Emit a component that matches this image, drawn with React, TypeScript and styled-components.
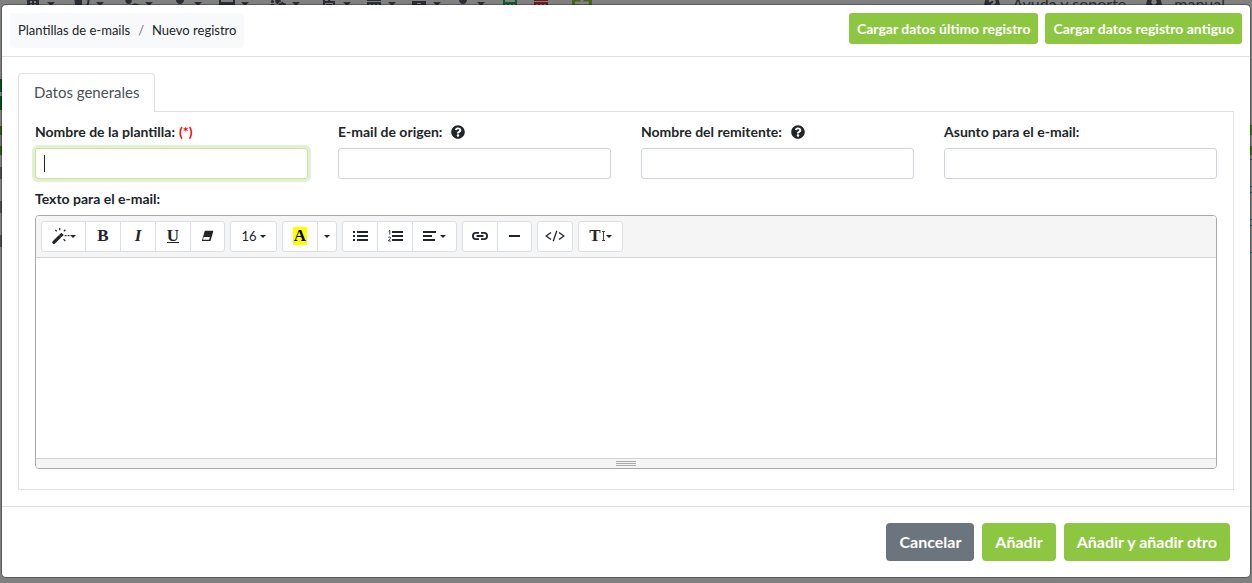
import React from 'react';
import styled, { createGlobalStyle, css } from 'styled-components';
import {
  FaBuilding, FaShieldAlt, FaUserShield, FaUser, FaWindowMaximize, FaUsersCog, FaFileInvoice,
  FaCalendarAlt, FaArchive, FaUserTie, FaCalculator, FaQuestionCircle, FaUserCircle, FaPlus,
} from 'react-icons/fa';

const GlobalStyle = createGlobalStyle`
  *, *::before, *::after { box-sizing: border-box; }
  body {
    margin: 0;
    background: #808080;
    color: #212529;
    font-family: Lato, "Liberation Sans", sans-serif;
    font-size: 14px;
    line-height: 20px;
  }
  button, input { font-family: inherit; }
`;

const Page = styled.div`
  position: relative;
  min-height: 100vh;
  overflow: hidden;
  padding: 4px 1px 5px;
`;

const Underlay = styled.div`
  position: absolute;
  inset: 0;
  display: flex;
  flex-direction: column;
  gap: 71px;
  color: #2a2d33;
`;

const NavBar = styled.div`
  display: flex;
  align-items: center;
  height: 8px;
  padding-left: 25px;
  font-size: 16px;
  line-height: 16px;
`;

const NavItem = styled.span<{ $w: number; $color?: string }>`
  display: flex;
  flex: none;
  align-items: center;
  gap: 6px;
  width: ${p => p.$w}px;
  color: ${p => p.$color ?? 'inherit'};
`;

const NavCaret = styled.i`
  border: 4px solid transparent;
  border-top-color: currentColor;
  border-bottom: 0;
`;

const AddTile = styled.span`
  display: flex;
  justify-content: center;
  width: 20px;
  height: 18px;
  background: #47641f;
  color: #808080;
`;

const NavUser = styled.span`
  display: flex;
  align-items: center;
  gap: 12px;
  margin-left: auto;
  padding-right: 20px;
  & + & { margin-left: 0; padding-right: 27px; }
`;

const PageEdges = styled.div`
  display: flex;
  justify-content: space-between;
`;

const Edge = styled.div`
  display: grid;
  grid-auto-rows: max-content;
  width: 2px;
`;

const EdgeMark = styled.i<{ $h: number; $color: string }>`
  height: ${p => p.$h}px;
  background: ${p => p.$color};
`;

const Modal = styled.div`
  position: relative;
  background: #fff;
  background-clip: padding-box;
  border: 1px solid rgba(0, 0, 0, 0.3);
  border-radius: 5px;
`;

const Header = styled.header`
  display: flex;
  align-items: flex-start;
  justify-content: space-between;
  padding: 8px;
  border-bottom: 1px solid #dee2e6;
`;

const Breadcrumb = styled.nav`
  display: flex;
  gap: 8px;
  padding: 7px 8px 8px;
  background: #f8f9fa;
  border-radius: 4px;
  font-size: 13px;
`;

const Crumb = styled.a`
  color: #212529;
  text-decoration: none;
`;

const Slash = styled.span`
  color: #6c757d;
`;

const Actions = styled.div<{ $gap: number }>`
  display: flex;
  justify-content: flex-end;
  gap: ${p => p.$gap}px;
`;

const Button = styled.button<{ $small?: boolean; $muted?: boolean }>`
  border: 0;
  border-radius: ${p => (p.$small ? 3 : 4)}px;
  background: ${p => (p.$muted ? '#6c757d' : '#8dc742')};
  color: #fff;
  font-weight: 700;
  cursor: pointer;
  ${p => p.$small
    ? css`height: 31px; padding: 0 8px; font-size: 14px;`
    : css`height: 38px; padding: 0 13px 2px; font-size: 16px;`}
`;

const Body = styled.main`
  padding: 16px;
`;

const Tabs = styled.div`
  display: flex;
`;

const Tab = styled.button`
  position: relative;
  height: 39px;
  margin-bottom: -1px;
  padding: 0 15px 2px;
  border: 1px solid #dee2e6;
  border-bottom: 0;
  border-radius: 4px 4px 0 0;
  background: #fff;
  color: #495057;
  font-size: 15px;
`;

const Panel = styled.section`
  padding: 10px 16px 20px;
  border: 1px solid #dee2e6;
`;

const Fields = styled.div`
  display: grid;
  grid-template-columns: repeat(4, 1fr);
  gap: 30px;
  margin-bottom: 10px;
`;

const Label = styled.label`
  display: flex;
  align-items: center;
  gap: 4px;
  height: 20px;
  font-weight: 700;
  svg { margin-left: 5px; }
`;

const Required = styled.span`
  color: #f00;
`;

const TextInput = styled.input<{ $active?: boolean }>`
  display: block;
  width: 100%;
  height: 31px;
  margin-top: 6px;
  padding: 4px 8px;
  border: 1px solid #ced4da;
  border-radius: 3px;
  outline: 0;
  background: #fff;
  font-size: 14px;
  ${p => p.$active && css`
    border-color: #c8e3a4;
    box-shadow: 0 0 0 3px #e2f1cf;
    caret-color: transparent;
    background: linear-gradient(#212529, #212529) 8px center / 1px 17px no-repeat #fff;
  `}
`;

const Editor = styled.div`
  margin-top: 6px;
  border: 1px solid #a9a9a9;
  border-radius: 4px;
  overflow: hidden;
`;

const Toolbar = styled.div`
  display: flex;
  gap: 5px;
  padding: 5px;
  background: #f5f5f5;
  border-bottom: 1px solid #d3d3d3;
`;

const Group = styled.div`
  display: flex;
`;

const Tool = styled.button<{ $w?: number; $gap?: number }>`
  display: flex;
  align-items: center;
  justify-content: center;
  gap: ${p => p.$gap ?? 3}px;
  width: ${p => p.$w ?? 36}px;
  height: 31px;
  padding: 0 0 1px;
  border: 1px solid #dae0e5;
  background: #fff;
  color: #212529;
  font-size: 13px;
  & + & { margin-left: -1px; }
  &:first-child { border-top-left-radius: 3px; border-bottom-left-radius: 3px; }
  &:last-child { border-top-right-radius: 3px; border-bottom-right-radius: 3px; }
`;

const Caret = styled.i`
  border: 3px solid transparent;
  border-top-color: currentColor;
  border-bottom: 0;
`;

const Glyph = styled.span<{ $italic?: boolean; $underline?: boolean }>`
  font: ${p => (p.$italic ? 'italic' : 'normal')} 700 17px/18px "Liberation Serif", serif;
  ${p => p.$underline && css`border-bottom: 1px solid; line-height: 13px;`}
`;

const Highlight = styled(Glyph)`
  padding: 0 1px;
  background: #ff0;
  color: #000;
`;

const EditArea = styled.div`
  height: 200px;
  background: #fff;
  outline: 0;
`;

const ResizeBar = styled.div`
  display: grid;
  gap: 1px;
  justify-content: center;
  padding: 2px 0;
  background: #f5f5f5;
  border-top: 1px solid #d3d3d3;
`;

const Grip = styled.i`
  width: 20px;
  height: 1px;
  background: #a9a9a9;
`;

const Footer = styled.footer`
  padding: 16px 20px 16px 16px;
  border-top: 1px solid #dee2e6;
`;

const WandIcon = () => (
  <svg width="18" height="16" viewBox="0 0 18 16" fill="none" stroke="#212529">
    <path d="M1.900 14.300 7.300 9" strokeWidth="3.200" strokeLinecap="round" />
    <path d="M8.200 8.200 10.600 5.800" strokeWidth="3.200" />
    <path d="M3.300 2l1.500 1.300M7.700 0v2.200M11.800 3.200l1.600-1.400M12.700 7.700h1.800M15.700 7.700h1.800M11.600 11.200l1.700 2" strokeWidth="1.200" />
  </svg>
);

const EraserIcon = () => (
  <svg width="13" height="12" viewBox="0 0 13 12">
    <path d="M3.800.8h8.600L9.500 11H.8z" fill="#212529" />
    <path d="M2.700 7h6.200l-.8 2.800H2z" fill="#fff" />
  </svg>
);

const LinesIcon = ({ numbered }: { numbered?: boolean }) => (
  <svg width="15" height="12" viewBox="0 0 15 12" fill="#212529">
    <path d="M4 1h11v2H4zM4 5h11v2H4zM4 9h11v2H4z" />
    {numbered
      ? <path d="M.6 1.200 1.800.4v4M.3 7.600c.5-.9 2.300-.8 2.200.3C2.400 8.900.8 9.800.5 11h2.400" fill="none" stroke="#212529" strokeWidth=".9" />
      : <path d="M0 1h2v2H0zM0 5h2v2H0zM0 9h2v2H0z" />}
  </svg>
);

const AlignIcon = () => (
  <svg width="14" height="12" viewBox="0 0 14 12" fill="#212529">
    <path d="M0 1h13v2H0zM0 5h9v2H0zM0 9h12v2H0z" />
  </svg>
);

const LinkIcon = () => (
  <svg width="16" height="10" viewBox="0 0 16 10" fill="none" stroke="#212529" strokeWidth="1.800">
    <path d="M7 1.800H4C2.200 1.800.9 3.200.9 5S2.200 8.200 4 8.200h3" />
    <path d="M9 1.800h3c1.800 0 3.100 1.400 3.100 3.200S13.800 8.200 12 8.200H9" />
    <path d="M4.500 5h7" />
  </svg>
);

const RuleIcon = () => (
  <svg width="11" height="4" viewBox="0 0 11 4"><path d="M0 1h11v2H0z" fill="#212529" /></svg>
);

const CodeIcon = () => (
  <svg width="20" height="12" viewBox="0 0 20 12" fill="none" stroke="#212529" strokeWidth="1.300">
    <path d="M6 2.500 1.200 6 6 9.500M14 2.500 18.800 6 14 9.500M11.800.8 8.200 11.200" />
  </svg>
);

const HeightIcon = () => (
  <svg width="5" height="12" viewBox="0 0 5 12" fill="none" stroke="#5a3a28" strokeWidth="1">
    <path d="M2.500 1v10M1 1.500h3M1 10.500h3" />
  </svg>
);

const navItems = [
  { icon: FaBuilding, w: 49 }, { icon: FaShieldAlt, w: 49 }, { icon: FaUserShield, w: 49 },
  { icon: FaUser, w: 47 }, { icon: FaWindowMaximize, w: 51 }, { icon: FaUsersCog, w: 51 },
  { icon: FaFileInvoice, w: 45 }, { icon: FaCalendarAlt, w: 45 }, { icon: FaArchive, w: 44 },
  { icon: FaUserTie, w: 47 },
];

const leftMarks: [number, string][] = [
  [13, '#0a4d1c'], [4, '#808080'], [14, '#0a4d1c'], [16, '#808080'], [9, '#2f5a12'],
  [11, '#707070'], [9, '#2f5a12'], [12, '#808080'], [12, '#4a4d50'], [22, '#808080'],
  [12, '#4a4d50'], [22, '#808080'], [12, '#4a4d50'],
];
const rightMarks: [number, string][] = [
  [46, '#808080'], [10, '#3f6f12'], [11, '#808080'], [9, '#3f6f12'], [4, '#808080'], [1, '#1c5a66'],
  [26, '#808080'], [1, '#1c5a66'], [5, '#808080'], [1, '#1c5a66'], [26, '#808080'], [1, '#1c5a66'],
  [5, '#808080'], [1, '#1c5a66'], [26, '#808080'], [1, '#1c5a66'],
];

export default function App() {
  return (
    <>
      <GlobalStyle />
      <Page>
        <Underlay aria-hidden="true">
          <NavBar>
            {navItems.map(({ icon: Icon, w }, i) => (
              <NavItem key={i} $w={w}><Icon /><NavCaret /></NavItem>
            ))}
            <NavItem $w={31} $color="#0f5a2c"><FaCalculator /></NavItem>
            <NavItem $w={39} $color="#6a1a1a"><FaCalendarAlt /></NavItem>
            <AddTile><FaPlus /></AddTile>
            <NavUser><FaQuestionCircle />Ayuda y soporte</NavUser>
            <NavUser><FaUserCircle />manual</NavUser>
          </NavBar>
          <PageEdges>
            <Edge>{leftMarks.map(([h, c], i) => <EdgeMark key={i} $h={h} $color={c} />)}</Edge>
            <Edge>{rightMarks.map(([h, c], i) => <EdgeMark key={i} $h={h} $color={c} />)}</Edge>
          </PageEdges>
        </Underlay>

        <Modal role="dialog" aria-label="Nuevo registro">
          <Header>
            <Breadcrumb>
              <Crumb href="#plantillas">Plantillas de e-mails</Crumb>
              <Slash>/</Slash>
              <Crumb href="#nuevo">Nuevo registro</Crumb>
            </Breadcrumb>
            <Actions $gap={7}>
              <Button $small type="button">Cargar datos último registro</Button>
              <Button $small type="button">Cargar datos registro antiguo</Button>
            </Actions>
          </Header>

          <Body>
            <Tabs role="tablist">
              <Tab role="tab" aria-selected="true" type="button">Datos generales</Tab>
            </Tabs>
            <Panel>
              <Fields>
                <div>
                  <Label htmlFor="nombre">Nombre de la plantilla: <Required>(*)</Required></Label>
                  <TextInput id="nombre" $active />
                </div>
                <div>
                  <Label htmlFor="origen">E-mail de origen: <FaQuestionCircle /></Label>
                  <TextInput id="origen" />
                </div>
                <div>
                  <Label htmlFor="remitente">Nombre del remitente: <FaQuestionCircle /></Label>
                  <TextInput id="remitente" />
                </div>
                <div>
                  <Label htmlFor="asunto">Asunto para el e-mail:</Label>
                  <TextInput id="asunto" />
                </div>
              </Fields>

              <Label as="div" id="texto">Texto para el e-mail:</Label>
              <Editor>
                <Toolbar role="toolbar">
                  <Group>
                    <Tool $w={45} $gap={0} aria-label="Estilo"><WandIcon /><Caret /></Tool>
                    <Tool><Glyph>B</Glyph></Tool>
                    <Tool><Glyph $italic>I</Glyph></Tool>
                    <Tool><Glyph $underline>U</Glyph></Tool>
                    <Tool $w={35} aria-label="Borrar formato"><EraserIcon /></Tool>
                  </Group>
                  <Group>
                    <Tool $w={47}>16<Caret /></Tool>
                  </Group>
                  <Group>
                    <Tool><Highlight>A</Highlight></Tool>
                    <Tool $w={20} aria-label="Más colores"><Caret /></Tool>
                  </Group>
                  <Group>
                    <Tool aria-label="Lista"><LinesIcon /></Tool>
                    <Tool aria-label="Lista numerada"><LinesIcon numbered /></Tool>
                    <Tool $w={45} aria-label="Párrafo"><AlignIcon /><Caret /></Tool>
                  </Group>
                  <Group>
                    <Tool aria-label="Enlace"><LinkIcon /></Tool>
                    <Tool $w={35} aria-label="Línea horizontal"><RuleIcon /></Tool>
                  </Group>
                  <Group>
                    <Tool aria-label="Código"><CodeIcon /></Tool>
                  </Group>
                  <Group>
                    <Tool $w={45} $gap={0} aria-label="Altura de línea"><Glyph>T</Glyph><HeightIcon /><Caret /></Tool>
                  </Group>
                </Toolbar>
                <EditArea role="textbox" aria-labelledby="texto" contentEditable suppressContentEditableWarning />
                <ResizeBar><Grip /><Grip /><Grip /></ResizeBar>
              </Editor>
            </Panel>
          </Body>

          <Footer>
            <Actions $gap={8}>
              <Button $muted type="button">Cancelar</Button>
              <Button type="button">Añadir</Button>
              <Button type="button">Añadir y añadir otro</Button>
            </Actions>
          </Footer>
        </Modal>
      </Page>
    </>
  );
}
